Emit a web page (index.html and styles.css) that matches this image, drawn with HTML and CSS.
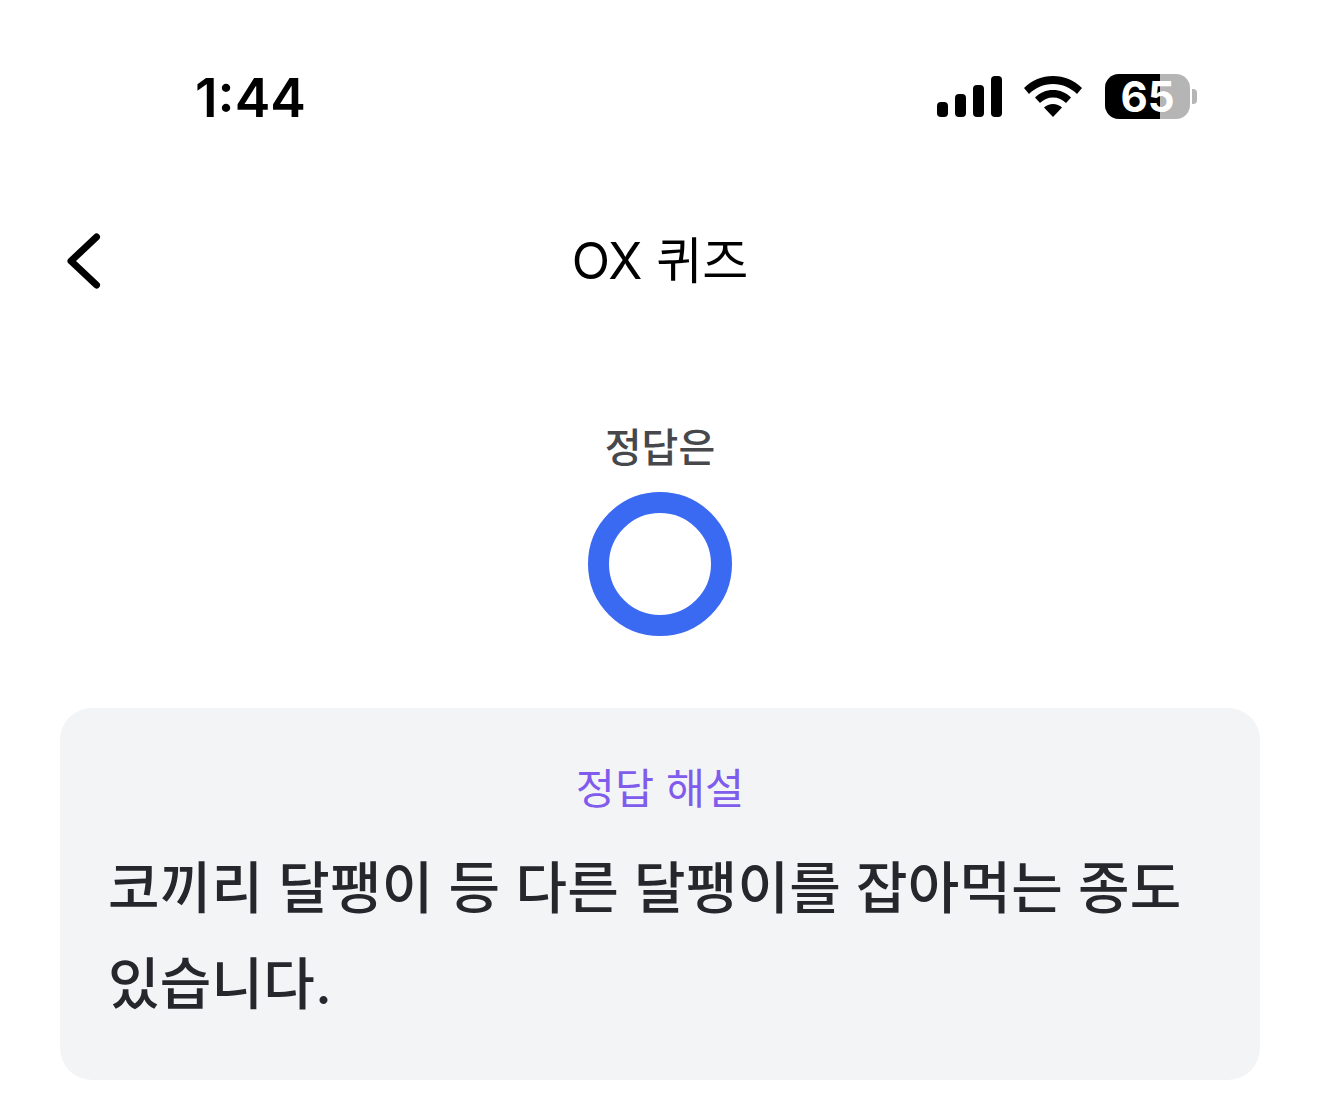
FILE: index.html
```html
<!DOCTYPE html>
<html lang="ko">
<head>
  <meta charset="UTF-8" />
  <meta name="viewport" content="width=device-width, initial-scale=1.0" />
  <title>OX 퀴즈</title>
  <link rel="stylesheet" href="styles.css">
</head>
<body>
  <div class="screen">
    <div class="status-bar">
      <span class="clock">1:44</span>
      <div class="status-icons">
        <svg class="signal" width="66" height="44" viewBox="0 -1 66 44" fill="#000">
          <rect x="1" y="26" width="11" height="15" rx="4" />
          <rect x="19" y="18" width="11" height="23" rx="4" />
          <rect x="37" y="9" width="11" height="32" rx="4" />
          <rect x="55" y="0" width="11" height="41" rx="4" />
        </svg>
        <svg class="wifi" width="59" height="44" viewBox="0 -1 59 44" fill="#000">
          <path d="M29 0C40 0 50 4 58 12L53 18C47 12 38.500 8 29 8S11 12 5 18L0 12C8 4 18 0 29 0Z" />
          <path d="M29 14C36 14 42 16.500 47 21.500L42 27C38.500 23.500 34 21.500 29 21.500S19.500 23.500 16 27L11 21.500C16 16.500 22 14 29 14Z" />
          <path d="M29 28C32.500 28 35.500 29.500 38 31.500L29 41L20 31.500C22.500 29.500 25.500 28 29 28Z" />
        </svg>
        <div class="battery">
          <div class="battery-body">
            <div class="battery-fill"></div>
            <span class="battery-level">65</span>
          </div>
          <div class="battery-cap"></div>
        </div>
      </div>
    </div>

    <header class="nav">
      <svg class="back" width="36" height="60" viewBox="0 0 36 60" fill="none" stroke="#000" stroke-width="7" stroke-linecap="round" stroke-linejoin="round">
        <path d="M30.500 6L5 30L30.500 54" />
      </svg>
      <h1 class="nav-title">OX 퀴즈</h1>
    </header>

    <section class="answer">
      <p class="answer-label">정답은</p>
      <div class="answer-ring"></div>
    </section>

    <section class="explain">
      <h2 class="explain-title">정답 해설</h2>
      <p class="explain-text">코끼리 달팽이 등 다른 달팽이를 잡아먹는 종도 있습니다.</p>
    </section>
  </div>
</body>
</html>
```

FILE: styles.css
```css
:root {
  --ring-blue: #3a6af2;
  --purple: #7f5cec;
  --card-bg: #f3f4f6;
  --text-dark: #25272c;
  --text-mid: #46484c;
}

* {
  box-sizing: border-box;
}

body {
  margin: 0;
  background: #fff;
  color: #000;
  font-family: "Inter", "Noto Sans CJK KR", sans-serif;
}

.screen {
  width: 1320px;
  height: 1115px;
  padding: 0 60px;
  overflow: hidden;
}

.status-bar {
  display: flex;
  justify-content: space-between;
  align-items: center;
  height: 118px;
  padding: 75px 63px 0 135px;
}

.clock {
  margin-top: 2px;
  font-size: 53.5px;
  font-weight: 600;
  line-height: 42px;
}

.status-icons {
  display: flex;
  align-items: center;
  gap: 22px;
}

.battery {
  display: flex;
  align-items: center;
  gap: 2px;
}

.battery-body {
  position: relative;
  width: 85px;
  height: 45px;
  border-radius: 14px;
  background: #b5b5b5;
}

.battery-fill {
  width: 65%;
  height: 100%;
  border-radius: 14px 0 0 14px;
  background: #000;
}

.battery-level {
  position: absolute;
  top: 0;
  left: 0;
  width: 100%;
  font-family: "Inter", sans-serif;
  font-size: 42px;
  font-weight: 700;
  line-height: 45px;
  text-align: center;
  color: #fff;
}

.battery-cap {
  width: 5px;
  height: 15px;
  border-radius: 0 4px 4px 0;
  background: #b5b5b5;
}

.nav {
  position: relative;
  display: flex;
  justify-content: center;
  align-items: center;
  height: 60px;
  margin-top: 113px;
}

.back {
  position: absolute;
  left: 6px;
  top: 0;
}

.nav-title {
  margin: 0;
  font-size: 50px;
  font-weight: 400;
  line-height: 60px;
}

.answer {
  display: flex;
  flex-direction: column;
  align-items: center;
  margin-top: 130px;
}

.answer-label {
  margin: 0;
  font-size: 40px;
  font-weight: 500;
  line-height: 54px;
  color: var(--text-mid);
}

.answer-ring {
  width: 144px;
  height: 144px;
  margin-top: 17px;
  border: 21px solid var(--ring-blue);
  border-radius: 50%;
}

.explain {
  margin-top: 72px;
  height: 372px;
  padding: 54px 48px 0;
  border-radius: 32px;
  background: var(--card-bg);
}

.explain-title {
  margin: 0;
  font-size: 42.5px;
  font-weight: 400;
  line-height: 54px;
  text-align: center;
  color: var(--purple);
}

.explain-text {
  margin: 24px 0 0;
  font-size: 56px;
  font-weight: 500;
  letter-spacing: 0.2px;
  line-height: 96px;
  color: var(--text-dark);
}
```
